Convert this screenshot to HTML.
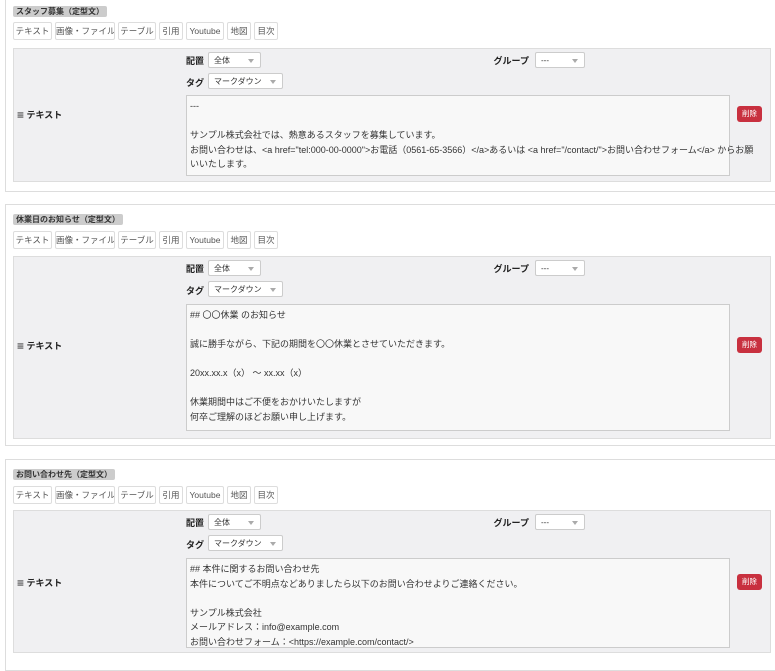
<!DOCTYPE html>
<html><head><meta charset="utf-8"><style>
body{margin:0;background:#fff;font-family:"Liberation Sans","Noto Sans CJK JP",sans-serif;font-size:9px;color:#333;width:775px;height:659px;overflow:hidden;position:relative}
.sec{position:absolute;left:5px;width:775px;border:1px solid #ddd;background:#fff}
.lbl{position:absolute;left:7px;height:11px;line-height:11px;background:#ccc;font-weight:bold;font-size:8px;padding:0 3px;border-radius:2px;color:#333;white-space:nowrap}
.btn{position:absolute;height:16px;line-height:16px;border:1px solid #ddd;border-radius:2px;font-size:8.5px;color:#555;text-align:center;background:#fff;white-space:nowrap;overflow:hidden}
.panel{position:absolute;left:7px;width:756px;background:#f0f0f2;border:1px solid #ddd}
.fl{position:absolute;font-weight:bold;font-size:9px;color:#222;white-space:nowrap}
.gr{position:absolute;left:440px;width:75px;text-align:right;font-weight:bold;font-size:9px;color:#222;white-space:nowrap}
.sel{position:absolute;height:16px;line-height:16px;border:1px solid #ccc;background:#fff;font-size:8px;padding-left:5px;box-sizing:border-box;border-radius:2px;white-space:nowrap}
.sel:after{content:"";position:absolute;right:6px;top:6px;border-left:3px solid transparent;border-right:3px solid transparent;border-top:4px solid #aaa}
.ta{position:absolute;left:172px;width:544px;background:#f8f8f8;border:1px solid #ccc;box-sizing:border-box;padding:3px 3px;font-size:9px;line-height:14.5px;color:#333;white-space:pre}
.del{position:absolute;left:723px;width:25px;height:16px;line-height:16px;background:#c8303f;color:#fff;font-size:7.5px;text-align:center;border-radius:3px}
.tx{position:absolute;left:3px;font-weight:bold;font-size:9px;color:#222;white-space:nowrap}
.tx b{font-size:12px;vertical-align:-1px}
</style></head><body>

<div class="sec" style="top:-1px;height:191px">
<div class="lbl" style="top:6px">スタッフ募集（定型文）</div>
<div class="btn" style="left:7px;top:22px;width:37px">テキスト</div>
<div class="btn" style="left:49px;top:22px;width:58px">画像・ファイル</div>
<div class="btn" style="left:112px;top:22px;width:36px">テーブル</div>
<div class="btn" style="left:153px;top:22px;width:22px">引用</div>
<div class="btn" style="left:180px;top:22px;width:36px">Youtube</div>
<div class="btn" style="left:221px;top:22px;width:22px">地図</div>
<div class="btn" style="left:248px;top:22px;width:22px">目次</div>
<div class="panel" style="top:48px;height:132px">
<div class="fl" style="left:172px;top:5px">配置</div><div class="sel" style="left:194px;top:3px;width:53px">全体</div>
<div class="gr" style="top:5px">グループ</div><div class="sel" style="left:521px;top:3px;width:50px">---</div>
<div class="fl" style="left:172px;top:27px">タグ</div><div class="sel" style="left:194px;top:24px;width:75px">マークダウン</div>
<div class="ta" style="top:46px;height:81px">---

サンプル株式会社では、熱意あるスタッフを募集しています。
お問い合わせは、&lt;a href="tel:000-00-0000"&gt;お電話（0561-65-3566）&lt;/a&gt;あるいは &lt;a href="/contact/"&gt;お問い合わせフォーム&lt;/a&gt; からお願
いいたします。</div>
<div class="del" style="top:57px">削除</div>
<div class="tx" style="top:59px"><b>≡</b> テキスト</div>
</div>
</div>

<div class="sec" style="top:204px;height:240px">
<div class="lbl" style="top:9px">休業日のお知らせ（定型文）</div>
<div class="btn" style="left:7px;top:26px;width:37px">テキスト</div>
<div class="btn" style="left:49px;top:26px;width:58px">画像・ファイル</div>
<div class="btn" style="left:112px;top:26px;width:36px">テーブル</div>
<div class="btn" style="left:153px;top:26px;width:22px">引用</div>
<div class="btn" style="left:180px;top:26px;width:36px">Youtube</div>
<div class="btn" style="left:221px;top:26px;width:22px">地図</div>
<div class="btn" style="left:248px;top:26px;width:22px">目次</div>
<div class="panel" style="top:51px;height:181px">
<div class="fl" style="left:172px;top:5px">配置</div><div class="sel" style="left:194px;top:3px;width:53px">全体</div>
<div class="gr" style="top:5px">グループ</div><div class="sel" style="left:521px;top:3px;width:50px">---</div>
<div class="fl" style="left:172px;top:27px">タグ</div><div class="sel" style="left:194px;top:24px;width:75px">マークダウン</div>
<div class="ta" style="top:47px;height:127px">## 〇〇休業 のお知らせ

誠に勝手ながら、下記の期間を〇〇休業とさせていただきます。

20xx.xx.x（x） 〜 xx.xx（x）

休業期間中はご不便をおかけいたしますが
何卒ご理解のほどお願い申し上げます。</div>
<div class="del" style="top:80px">削除</div>
<div class="tx" style="top:82px"><b>≡</b> テキスト</div>
</div>
</div>

<div class="sec" style="top:459px;height:210px">
<div class="lbl" style="top:9px">お問い合わせ先（定型文）</div>
<div class="btn" style="left:7px;top:26px;width:37px">テキスト</div>
<div class="btn" style="left:49px;top:26px;width:58px">画像・ファイル</div>
<div class="btn" style="left:112px;top:26px;width:36px">テーブル</div>
<div class="btn" style="left:153px;top:26px;width:22px">引用</div>
<div class="btn" style="left:180px;top:26px;width:36px">Youtube</div>
<div class="btn" style="left:221px;top:26px;width:22px">地図</div>
<div class="btn" style="left:248px;top:26px;width:22px">目次</div>
<div class="panel" style="top:50px;height:141px">
<div class="fl" style="left:172px;top:5px">配置</div><div class="sel" style="left:194px;top:3px;width:53px">全体</div>
<div class="gr" style="top:5px">グループ</div><div class="sel" style="left:521px;top:3px;width:50px">---</div>
<div class="fl" style="left:172px;top:27px">タグ</div><div class="sel" style="left:194px;top:24px;width:75px">マークダウン</div>
<div class="ta" style="top:47px;height:90px">## 本件に関するお問い合わせ先
本件についてご不明点などありましたら以下のお問い合わせよりご連絡ください。

サンプル株式会社
メールアドレス：info@example.com
お問い合わせフォーム：&lt;https://example.com/contact/&gt;</div>
<div class="del" style="top:63px">削除</div>
<div class="tx" style="top:65px"><b>≡</b> テキスト</div>
</div>
</div>

</body></html>
